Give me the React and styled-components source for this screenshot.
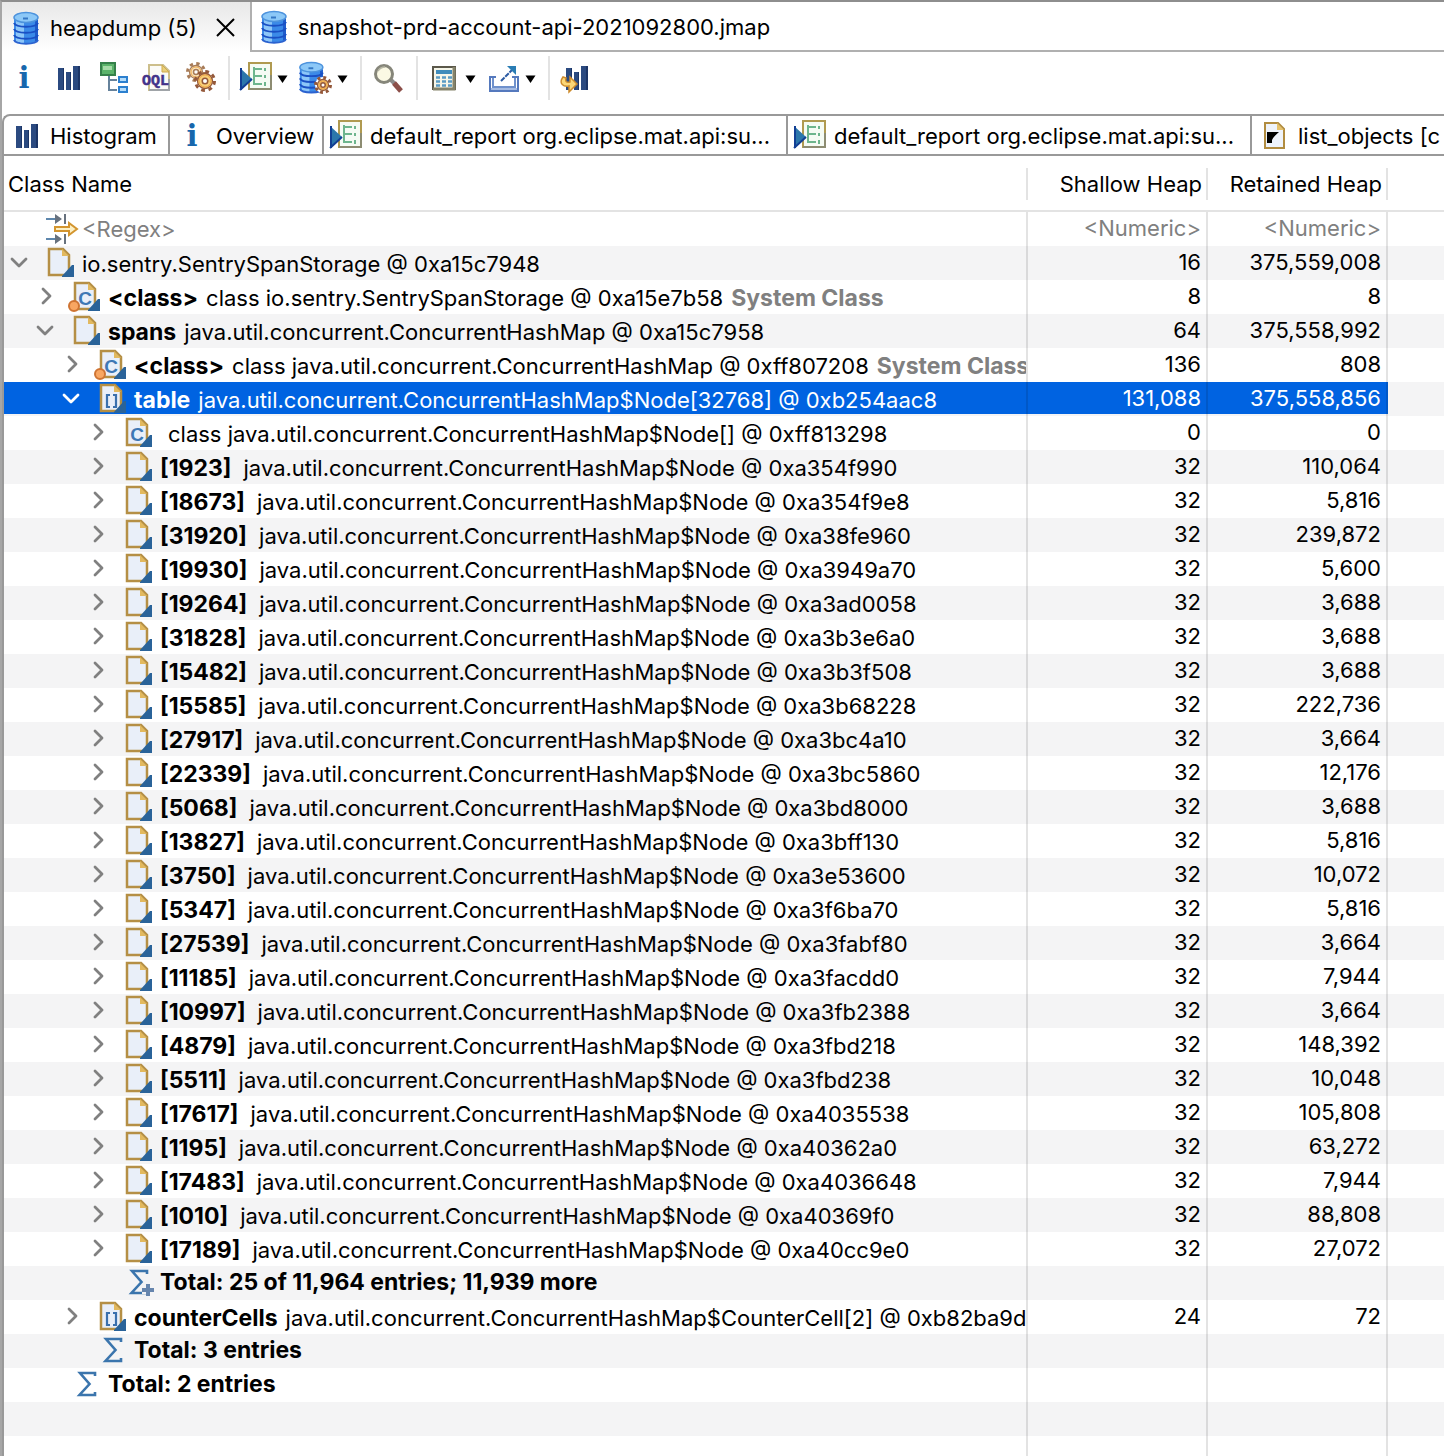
import React from 'react';
import styled, { createGlobalStyle } from 'styled-components';

const colors = {
  frame: '#a6a6a6',
  tabBorder: '#999999',
  grid: 'rgba(0, 0, 0, 0.11)',
  stripe: '#f4f4f5',
  selected: '#0063e1',
  muted: '#808080',
};

const GlobalStyle = createGlobalStyle`
  * {
    box-sizing: border-box;
  }
  body {
    margin: 0;
    background: white;
    color: black;
    font-family: Inter, 'Liberation Sans', sans-serif;
    font-size: 22px;
    line-height: 28px;
  }
  button, input {
    font: inherit;
    color: inherit;
    border: 0;
    padding: 0;
    background: transparent;
  }
`;

const Window = styled.div`
  display: flex;
  flex-direction: column;
  height: 100vh;
  overflow: hidden;
  border-top: 2px solid #8e8e8e;
  border-left: 2px solid ${colors.frame};
`;

const EditorTabs = styled.div`
  display: flex;
  height: 50px;
  flex-shrink: 0;
`;

const EditorTab = styled.div`
  display: flex;
  align-items: center;
  gap: 18px;
  padding: 2px 15px 0 ${(props) => (props.$active ? '8px' : '6px')};
  flex-grow: ${(props) => (props.$active ? 0 : 1)};
  background: ${(props) => (props.$active ? 'linear-gradient(#e8e8e8, #ffffff)' : 'white')};
  border: solid #b0b0b0;
  border-width: ${(props) => (props.$active ? '0' : '0 0 2px 2px')};
`;

const TabButton = styled.button`
  display: flex;
  align-items: center;
  gap: 8px;
  white-space: nowrap;
`;

const CloseButton = styled.button`
  display: flex;
`;

const Toolbar = styled.div`
  display: flex;
  align-items: center;
  height: 62px;
  flex-shrink: 0;
  padding: 4px 0 14px;
`;

const ToolGroup = styled.div`
  display: flex;
  align-items: center;
  height: 44px;
  gap: 12px;
  padding: 0 12px 0 ${(props) => (props.$first ? '6px' : '10px')};
  border-left: ${(props) => (props.$first ? '0' : `2px solid ${colors.grid}`)};
`;

const ToolButton = styled.button`
  display: flex;
  align-items: center;
  gap: 5px;
`;

const ViewPanel = styled.div`
  flex: 1;
  min-height: 0;
  display: flex;
  flex-direction: column;
  border-left: 2px solid ${colors.tabBorder};
  border-top: 2px solid ${colors.tabBorder};
  border-top-left-radius: 8px;
  overflow: hidden;
`;

const ViewTabs = styled.div`
  display: flex;
  height: 40px;
  flex-shrink: 0;
  border-bottom: 2px solid ${colors.tabBorder};
`;

const ViewTab = styled(TabButton)`
  flex: ${(props) => (props.$width ? `0 0 ${props.$width}px` : '1 0 auto')};
  padding: 2px 0 0 6px;
  border-right: ${(props) => (props.$width ? `2px solid ${colors.tabBorder}` : '0')};
`;

const TreeTable = styled.table`
  width: 100%;
  table-layout: fixed;
  border-collapse: separate;
  border-spacing: 0;
`;

const NumberCol = styled.col`
  width: 180px;
`;

const FillerCol = styled.col`
  width: 56px;
`;

const HeadCell = styled.th`
  height: 56px;
  padding: 12px 0 10px;
  font-weight: 400;
  border-bottom: 2px solid ${colors.grid};
`;

const HeadLabel = styled.div`
  height: 32px;
  line-height: 32px;
  white-space: nowrap;
  padding: 0 4px;
  text-align: ${(props) => props.$align || 'left'};
  border-right: 2px solid ${colors.grid};
`;

const Row = styled.tr`
  height: 34px;
  background: ${(props) => (props.$striped ? colors.stripe : 'white')};
`;

const Cell = styled.td`
  height: 34px;
  padding: 0;
  overflow: hidden;
  white-space: nowrap;
  color: ${(props) => (props.$selected ? 'white' : 'inherit')};
  border-right: 2px solid ${colors.grid};
  background: ${(props) =>
    props.$selected ? `linear-gradient(${colors.selected} 32px, ${colors.stripe} 32px)` : 'transparent'};
`;

const NumberCell = styled(Cell)`
  padding: 0 5px 2px 0;
  text-align: right;
`;

const FillerCell = styled.td`
  padding: 0;
`;

const TreeItem = styled.div`
  display: flex;
  align-items: center;
  height: 34px;
  padding-left: ${(props) => 6 + props.$level * 26}px;
`;

const Twisty = styled.button`
  display: flex;
  justify-content: center;
  width: 18px;
  height: 20px;
  margin: 0 14px 2px 0;
  flex-shrink: 0;
  color: ${(props) => (props.$selected ? 'white' : colors.muted)};
`;

const TwistySpace = styled.span`
  width: 32px;
  flex-shrink: 0;
`;

const ItemLabel = styled.span`
  display: flex;
  align-items: baseline;
  gap: ${(props) => (props.$indexed ? 12 : 8)}px;
  padding: ${(props) => (props.$total ? '0 0 2px 8px' : '2px 0 0 8px')};
`;

const FieldName = styled.b`
  font-size: 23px;
  font-weight: 700;
`;

const Note = styled(FieldName)`
  color: ${colors.muted};
`;

const FilterInput = styled.input`
  display: block;
  width: 100%;
  height: 32px;
  padding-left: ${(props) => (props.$numeric ? 0 : 8)}px;
  text-align: ${(props) => (props.$numeric ? 'right' : 'left')};
  outline: none;
  &::placeholder {
    color: ${colors.muted};
    opacity: 1;
  }
`;

const Svg = styled.svg`
  display: block;
  flex-shrink: 0;
  overflow: visible;
`;

function Icon({ size = 32, children }) {
  return (
    <Svg width={size} height={size} viewBox={`0 0 ${size} ${size}`} fill="none" aria-hidden="true">
      {children}
    </Svg>
  );
}

function Caret() {
  return (
    <Svg width="11" height="9" viewBox="0 0 11 9" aria-hidden="true">
      <path d="M0.500 1.500h10L5.500 9z" fill="black" />
    </Svg>
  );
}

function DatabaseShape() {
  return (
    <>
      <path d="M4 5v23c2 5 22 5 24 0V5z" fill="#3b8ae8" />
      <path d="M8 8v22M12 9v22" stroke="#8cc6f8" strokeWidth="4" />
      <path d="M26.500 8v21" stroke="#1f5ccb" strokeWidth="3" />
      <path d="M4 11c2 5 22 5 24 0M4 17c2 5 22 5 24 0M4 23c2 5 22 5 24 0" stroke="#1a50c4" strokeWidth="2" />
      <path d="M4 28c2 5 22 5 24 0" stroke="#2b62cf" strokeWidth="2" />
      <ellipse cx="16" cy="5.500" rx="12" ry="5" fill="#8cc8f7" stroke="#4d93dd" strokeWidth="1.500" />
      <path d="M13 6.500h5" stroke="#3477c4" strokeWidth="2" />
    </>
  );
}

function GearShape({ x, y, r, fill = '#f9cf78', stroke = '#94583a' }) {
  const tooth = (r - 1.5) * 0.3927;
  return (
    <g transform={`translate(${x} ${y})`}>
      <circle r={r - 1.5} stroke={stroke} strokeWidth="3" strokeDasharray={`${tooth} ${tooth}`} />
      <circle r={r - 3.5} fill={fill} stroke={stroke} strokeWidth="1.300" />
      <circle r={r - 5} stroke="#f0a84a" strokeWidth="1" />
      <circle r={r * 0.25} fill="white" stroke={stroke} strokeWidth="1.500" />
    </g>
  );
}

function BarsShape() {
  return (
    <>
      <path d="M6 6h6v22H6zM14 10h5v18h-5zM21 4h7v24h-7z" fill="#2b4a80" />
      <path d="M11 6h1v22h-1zM18 10h1v18h-1zM26 4h2v24h-2z" fill="#1c3566" />
    </>
  );
}

function DatabaseIcon() {
  return (
    <Icon>
      <DatabaseShape />
    </Icon>
  );
}

function HistogramIcon() {
  return (
    <Icon>
      <BarsShape />
    </Icon>
  );
}

function InfoIcon() {
  return (
    <Icon>
      <text x="16" y="26" textAnchor="middle" fontFamily="DejaVu Serif" fontWeight="700" fontSize="29" fill="#1767ad">
        i
      </text>
    </Icon>
  );
}

function DominatorIcon() {
  return (
    <Icon>
      <path d="M13 14v14h8M13 18h8" stroke="#66829b" strokeWidth="2" />
      <rect x="5" y="1" width="14" height="12" fill="#5bb36a" stroke="#35804a" strokeWidth="2" />
      <path d="M7 4h9v4H7z" fill="#a6dba8" />
      <rect x="23" y="15" width="8" height="5" fill="#b4dcfa" stroke="#2c80cf" strokeWidth="2" />
      <rect x="23" y="25" width="8" height="5" fill="#b4dcfa" stroke="#2c80cf" strokeWidth="2" />
    </Icon>
  );
}

function OqlIcon() {
  return (
    <Icon>
      <path d="M9 3h14l6 6v19H9z" fill="#fbfbf7" stroke="#cdbf8c" strokeWidth="2" />
      <path d="M22 3v7h7z" fill="#e9cf7a" stroke="#cfab4e" />
      <path d="M9 28h20V17" stroke="#a0a4a8" strokeWidth="2" />
      <text x="2" y="23" fontFamily="Liberation Mono" fontWeight="700" fontSize="15" fill="#43338a" stroke="#43338a" strokeWidth=".5">
        OQL
      </text>
    </Icon>
  );
}

function GearsIcon() {
  return (
    <Icon>
      <GearShape x={12} y={10} r={10} fill="#fbe8c4" stroke="#a87c58" />
      <GearShape x={21} y={19} r={11} />
    </Icon>
  );
}

function ReportIcon() {
  return (
    <Icon>
      <rect x="9" y="1" width="22" height="26" fill="#f5fbf4" stroke="#b09a50" strokeWidth="2" />
      <path d="M9 27h22V13" stroke="#8d8c72" strokeWidth="2" />
      <path d="M14 5v18M14 7h8M14 14h8M14 22h8" stroke="#6db58d" strokeWidth="2" />
      <path d="M25 6v3M25 13v3M25 20v4" stroke="#6db58d" strokeWidth="2" />
      <path d="M0 6v22l12-11z" fill="#2c77ab" />
      <path d="M1 6v22M12 17L0 28" stroke="#123f94" strokeWidth="2" />
    </Icon>
  );
}

function QueryIcon() {
  return (
    <Icon>
      <g transform="translate(-4 0) scale(.96)">
        <DatabaseShape />
      </g>
      <circle cx="23" cy="23" r="8" fill="white" />
      <GearShape x={23} y={23} r={9} />
    </Icon>
  );
}

function SearchIcon() {
  return (
    <Icon>
      <path d="M19 18l5 5" stroke="#8a8a8a" strokeWidth="4" />
      <path d="M22 21l7 8" stroke="#8c4f49" strokeWidth="5" />
      <circle cx="12" cy="12" r="8.500" fill="#fbf9e4" stroke="#86867a" strokeWidth="3" />
      <path d="M6 9c2-3 4-4 7-4" stroke="#b7b7a5" strokeWidth="1.500" />
    </Icon>
  );
}

function CalculatorIcon() {
  return (
    <Icon>
      <rect x="5" y="5" width="22" height="22" fill="#f6f6e9" stroke="#5b584a" strokeWidth="2" />
      <path d="M26 5v22H5" stroke="#85836b" strokeWidth="3" />
      <path d="M8 8h16v4H8z" fill="#3f8cbb" />
      <path d="M8 15.500h16M8 19.500h16M8 23.500h16" stroke="#5b9cc4" strokeWidth="2.500" strokeDasharray="4 2" />
    </Icon>
  );
}

function ExportIcon() {
  return (
    <Icon>
      <path d="M8 15H2v14h28V15h-6" stroke="#5579bd" strokeWidth="2" />
      <path d="M5 16v9h22v-9" stroke="#6f91cc" strokeWidth="2" />
      <path d="M3 27h26" stroke="#a5bbe2" strokeWidth="2" />
      <path d="M13 19L25 7" stroke="#2c5ba3" strokeWidth="2" strokeDasharray="5 1" />
      <path d="M19 4h9v9z" fill="#2a7db4" />
    </Icon>
  );
}

function CompareIcon() {
  return (
    <Icon>
      <BarsShape />
      <path d="M3 15c-5 7 1 10 6 9v6l8-8-7-7v5c-4 1-5-1-4-4z" fill="#fbd778" stroke="#ce8c2c" strokeWidth="1.500" />
    </Icon>
  );
}

function ListObjectsIcon() {
  return (
    <Icon>
      <path d="M7 3h13l6 6v19H7z" fill="#eef3fb" stroke="#b18c40" strokeWidth="2" />
      <path d="M19 3v7h7z" fill="#e5c16c" />
      <path d="M9 12h12c-3 3-6 5-7 8v3H9z" fill="black" />
    </Icon>
  );
}

function FilterIcon() {
  return (
    <Icon>
      <path d="M4 6h10M4 26h10" stroke="#5e87ad" strokeWidth="2" />
      <path d="M13 1l7 5-7 5zM13 21l7 5-7 5z" fill="#68727e" />
      <path d="M23 1v10M23 21v10" stroke="#68727e" strokeWidth="2" />
      <path d="M13 14h14v-4l8 6-8 6v-4H13z" fill="#fdf0c4" stroke="#d3952f" strokeWidth="2" />
    </Icon>
  );
}

// Heap object page; `kind` adds the class letter, array brackets or the field marker
function ObjectIcon({ kind }) {
  return (
    <Icon>
      <path d="M7 2h14l6 6v20H7z" fill="#e9eff9" stroke="#b58f45" strokeWidth="2.500" />
      <path d="M20 2v7h7z" fill="#e2b95f" />
      <path d="M32 18v12H20v-1l10-11z" fill="#2a6399" />
      {(kind === 'class' || kind === 'classField') && (
        <text x="17" y="24" textAnchor="middle" fontFamily="Liberation Sans" fontWeight="700" fontSize="19" fill="#3f78b5">
          C
        </text>
      )}
      {kind === 'array' && (
        <path d="M16 12h-3v12h3M19 12h3v12h-3" stroke="#3a70ad" strokeWidth="2.200" />
      )}
      {kind === 'classField' && (
        <circle cx="6" cy="25" r="5" fill="#f8a662" stroke="#cf7433" strokeWidth="2" />
      )}
    </Icon>
  );
}

function SumIcon({ more }) {
  return (
    <Icon>
      <path d="M27 7V4H12l9.500 11L11.500 26H27v-3" stroke="#3b75ad" strokeWidth="2.600" />
      {more && (
        <>
          <path d="M22 17h5v-2h4v4h4v8h-13z" fill={colors.stripe} />
          <path d="M28 17v12M22 23h12" stroke="#6685ad" strokeWidth="4" />
        </>
      )}
    </Icon>
  );
}

function Chevron({ open }) {
  return (
    <Icon size={20}>
      <path
        d={open ? 'M3 7l7 7 7-7' : 'M8 3l7 7-7 7'}
        stroke="currentColor"
        strokeWidth="2.800"
        strokeLinecap="round"
        strokeLinejoin="round"
      />
    </Icon>
  );
}

const nodes = [
  ['1923', '0xa354f990', '110,064'],
  ['18673', '0xa354f9e8', '5,816'],
  ['31920', '0xa38fe960', '239,872'],
  ['19930', '0xa3949a70', '5,600'],
  ['19264', '0xa3ad0058', '3,688'],
  ['31828', '0xa3b3e6a0', '3,688'],
  ['15482', '0xa3b3f508', '3,688'],
  ['15585', '0xa3b68228', '222,736'],
  ['27917', '0xa3bc4a10', '3,664'],
  ['22339', '0xa3bc5860', '12,176'],
  ['5068', '0xa3bd8000', '3,688'],
  ['13827', '0xa3bff130', '5,816'],
  ['3750', '0xa3e53600', '10,072'],
  ['5347', '0xa3f6ba70', '5,816'],
  ['27539', '0xa3fabf80', '3,664'],
  ['11185', '0xa3facdd0', '7,944'],
  ['10997', '0xa3fb2388', '3,664'],
  ['4879', '0xa3fbd218', '148,392'],
  ['5511', '0xa3fbd238', '10,048'],
  ['17617', '0xa4035538', '105,808'],
  ['1195', '0xa40362a0', '63,272'],
  ['17483', '0xa4036648', '7,944'],
  ['1010', '0xa40369f0', '88,808'],
  ['17189', '0xa40cc9e0', '27,072'],
];

const rows = [
  { level: 0, open: true, text: 'io.sentry.SentrySpanStorage @ 0xa15c7948', shallow: '16', retained: '375,559,008' },
  {
    level: 1,
    kind: 'classField',
    name: '<class>',
    text: 'class io.sentry.SentrySpanStorage @ 0xa15e7b58',
    note: 'System Class',
    shallow: '8',
    retained: '8',
  },
  {
    level: 1,
    open: true,
    name: 'spans',
    text: 'java.util.concurrent.ConcurrentHashMap @ 0xa15c7958',
    shallow: '64',
    retained: '375,558,992',
  },
  {
    level: 2,
    kind: 'classField',
    name: '<class>',
    text: 'class java.util.concurrent.ConcurrentHashMap @ 0xff807208',
    note: 'System Class',
    shallow: '136',
    retained: '808',
  },
  {
    level: 2,
    kind: 'array',
    open: true,
    selected: true,
    name: 'table',
    text: 'java.util.concurrent.ConcurrentHashMap$Node[32768] @ 0xb254aac8',
    shallow: '131,088',
    retained: '375,558,856',
  },
  {
    level: 3,
    kind: 'class',
    name: '',
    text: 'class java.util.concurrent.ConcurrentHashMap$Node[] @ 0xff813298',
    shallow: '0',
    retained: '0',
  },
  ...nodes.map(([index, address, retained]) => ({
    level: 3,
    indexed: true,
    name: `[${index}]`,
    text: `java.util.concurrent.ConcurrentHashMap$Node @ ${address}`,
    shallow: '32',
    retained,
  })),
  { level: 3, total: 'Total: 25 of 11,964 entries; 11,939 more', more: true },
  {
    level: 2,
    kind: 'array',
    name: 'counterCells',
    text: 'java.util.concurrent.ConcurrentHashMap$CounterCell[2] @ 0xb82ba9d',
    shallow: '24',
    retained: '72',
  },
  { level: 2, total: 'Total: 3 entries' },
  { level: 1, total: 'Total: 2 entries' },
];

const viewTabs = [
  { label: 'Histogram', icon: <HistogramIcon />, width: 166 },
  { label: 'Overview', icon: <InfoIcon />, width: 154 },
  { label: 'default_report org.eclipse.mat.api:su...', icon: <ReportIcon />, width: 464 },
  { label: 'default_report org.eclipse.mat.api:su...', icon: <ReportIcon />, width: 464 },
  { label: 'list_objects [c', icon: <ListObjectsIcon /> },
];

function Tool({ label, menu, children }) {
  return (
    <ToolButton type="button" aria-label={label} aria-haspopup={menu ? 'menu' : undefined}>
      {children}
      {menu && <Caret />}
    </ToolButton>
  );
}

function TreeRow({ row, striped }) {
  const { level, open, selected, kind, indexed, name, text, note, total, more } = row;
  return (
    <Row $striped={striped} aria-selected={!!selected}>
      <Cell $selected={selected}>
        <TreeItem $level={level}>
          {total ? (
            <TwistySpace />
          ) : (
            <Twisty type="button" $selected={selected} aria-label={open ? 'Collapse' : 'Expand'} aria-expanded={!!open}>
              <Chevron open={open} />
            </Twisty>
          )}
          {total ? <SumIcon more={more} /> : <ObjectIcon kind={kind} />}
          <ItemLabel $total={!!total} $indexed={indexed}>
            {total && <FieldName>{total}</FieldName>}
            {name !== undefined && <FieldName>{name}</FieldName>}
            {text && <span>{text}</span>}
            {note && <Note>{note}</Note>}
          </ItemLabel>
        </TreeItem>
      </Cell>
      <NumberCell $selected={selected}>{row.shallow}</NumberCell>
      <NumberCell $selected={selected}>{row.retained}</NumberCell>
      <FillerCell />
    </Row>
  );
}

function EmptyRow({ striped }) {
  return (
    <Row $striped={striped}>
      <Cell />
      <Cell />
      <Cell />
      <FillerCell />
    </Row>
  );
}

export default function App() {
  return (
    <>
      <GlobalStyle />
      <Window>
        <EditorTabs>
          <EditorTab $active>
            <TabButton type="button">
              <DatabaseIcon />
              heapdump (5)
            </TabButton>
            <CloseButton type="button" aria-label="Close">
              <Icon size={20}>
                <path d="M2 1l17 17M19 1L2 18" stroke="black" strokeWidth="2" />
              </Icon>
            </CloseButton>
          </EditorTab>
          <EditorTab>
            <TabButton type="button">
              <DatabaseIcon />
              snapshot-prd-account-api-2021092800.jmap
            </TabButton>
          </EditorTab>
        </EditorTabs>
        <Toolbar>
          <ToolGroup $first>
            <Tool label="Overview"><InfoIcon /></Tool>
            <Tool label="Histogram"><HistogramIcon /></Tool>
            <Tool label="Dominator tree"><DominatorIcon /></Tool>
            <Tool label="OQL"><OqlIcon /></Tool>
            <Tool label="Thread overview"><GearsIcon /></Tool>
          </ToolGroup>
          <ToolGroup>
            <Tool label="Run report" menu><ReportIcon /></Tool>
            <Tool label="Query browser" menu><QueryIcon /></Tool>
          </ToolGroup>
          <ToolGroup>
            <Tool label="Find object"><SearchIcon /></Tool>
          </ToolGroup>
          <ToolGroup>
            <Tool label="Calculate retained size" menu><CalculatorIcon /></Tool>
            <Tool label="Export" menu><ExportIcon /></Tool>
          </ToolGroup>
          <ToolGroup>
            <Tool label="Compare"><CompareIcon /></Tool>
          </ToolGroup>
        </Toolbar>
        <ViewPanel>
          <ViewTabs>
            {viewTabs.map((tab, index) => (
              <ViewTab key={index} type="button" $width={tab.width}>
                {tab.icon}
                {tab.label}
              </ViewTab>
            ))}
          </ViewTabs>
          <TreeTable>
            <colgroup>
              <col />
              <NumberCol />
              <NumberCol />
              <FillerCol />
            </colgroup>
            <thead>
              <tr>
                <HeadCell><HeadLabel>Class Name</HeadLabel></HeadCell>
                <HeadCell><HeadLabel $align="right">Shallow Heap</HeadLabel></HeadCell>
                <HeadCell><HeadLabel $align="right">Retained Heap</HeadLabel></HeadCell>
                <HeadCell />
              </tr>
            </thead>
            <tbody>
              <Row>
                <Cell>
                  <TreeItem $level={0}>
                    <TwistySpace />
                    <FilterIcon />
                    <FilterInput placeholder="<Regex>" aria-label="Class Name filter" />
                  </TreeItem>
                </Cell>
                <NumberCell>
                  <FilterInput $numeric placeholder="<Numeric>" aria-label="Shallow Heap filter" />
                </NumberCell>
                <NumberCell>
                  <FilterInput $numeric placeholder="<Numeric>" aria-label="Retained Heap filter" />
                </NumberCell>
                <FillerCell />
              </Row>
              {rows.map((row, index) => (
                <TreeRow key={index} row={row} striped={index % 2 === 0} />
              ))}
              <EmptyRow striped />
              <EmptyRow />
            </tbody>
          </TreeTable>
        </ViewPanel>
      </Window>
    </>
  );
}
